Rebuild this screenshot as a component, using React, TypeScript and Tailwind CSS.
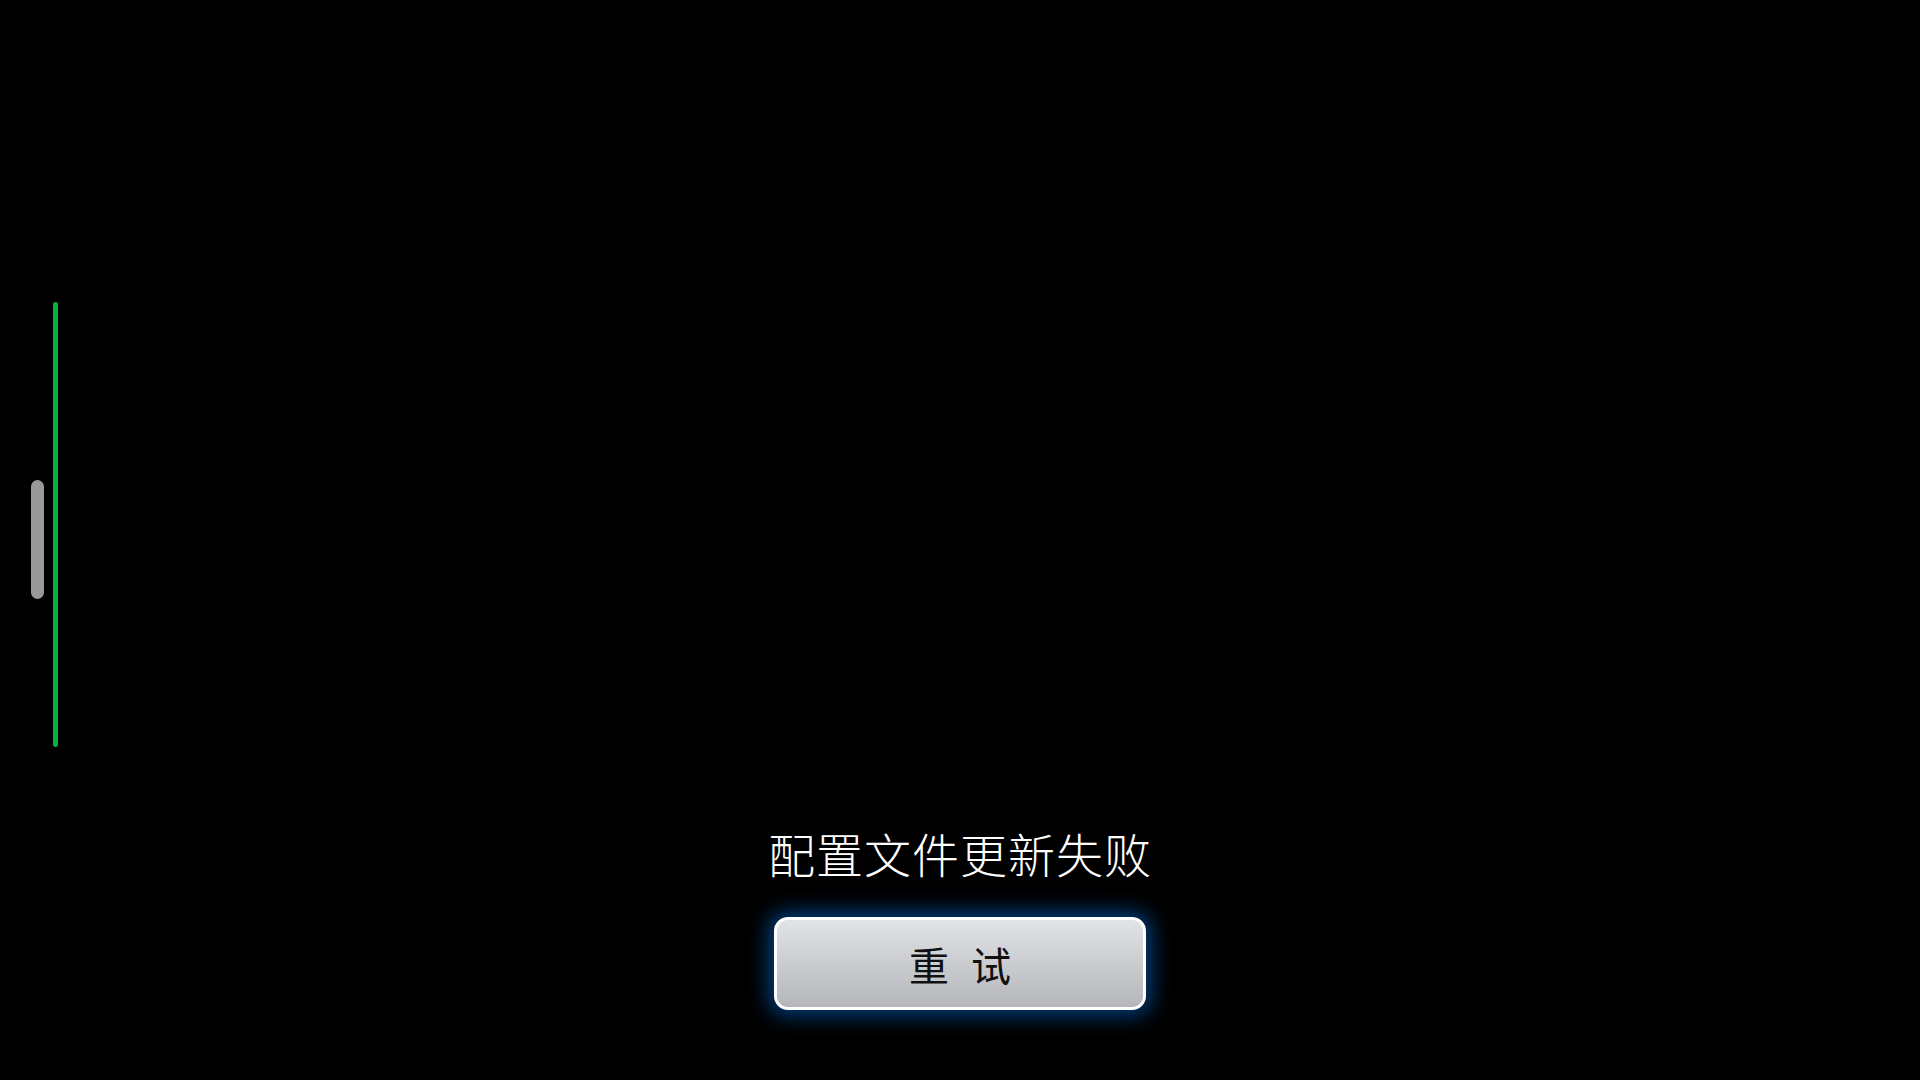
import React from "react";

export default function App() {
  return (
    <div
      className="relative w-[1920px] h-[1080px] bg-black overflow-hidden flex flex-col items-center justify-end pb-[70px]"
      style={{ fontFamily: '"Noto Sans CJK SC", "Noto Sans", sans-serif' }}
    >
      <div className="absolute left-[53px] top-[302px] w-[5px] h-[445px] rounded-full bg-[#00b33c]" />
      <div className="absolute left-[31px] top-[480px] w-[13px] h-[119px] rounded-full bg-[#999999]" />

      <div className="text-white text-[47px] leading-[56px] font-light tracking-[1px] mb-[36px]">
        配置文件更新失败
      </div>
      <button className="w-[372px] h-[93px] rounded-[14px] border-[3px] border-white bg-gradient-to-b from-[#e2e3e7] to-[#b5b6ba] shadow-[0_0_20px_6px_rgba(0,100,200,0.6)] flex items-center justify-center text-[#111] text-[40px] leading-none">
        <span className="mr-[22px]">重</span>
        <span>试</span>
      </button>
    </div>
  );
}
